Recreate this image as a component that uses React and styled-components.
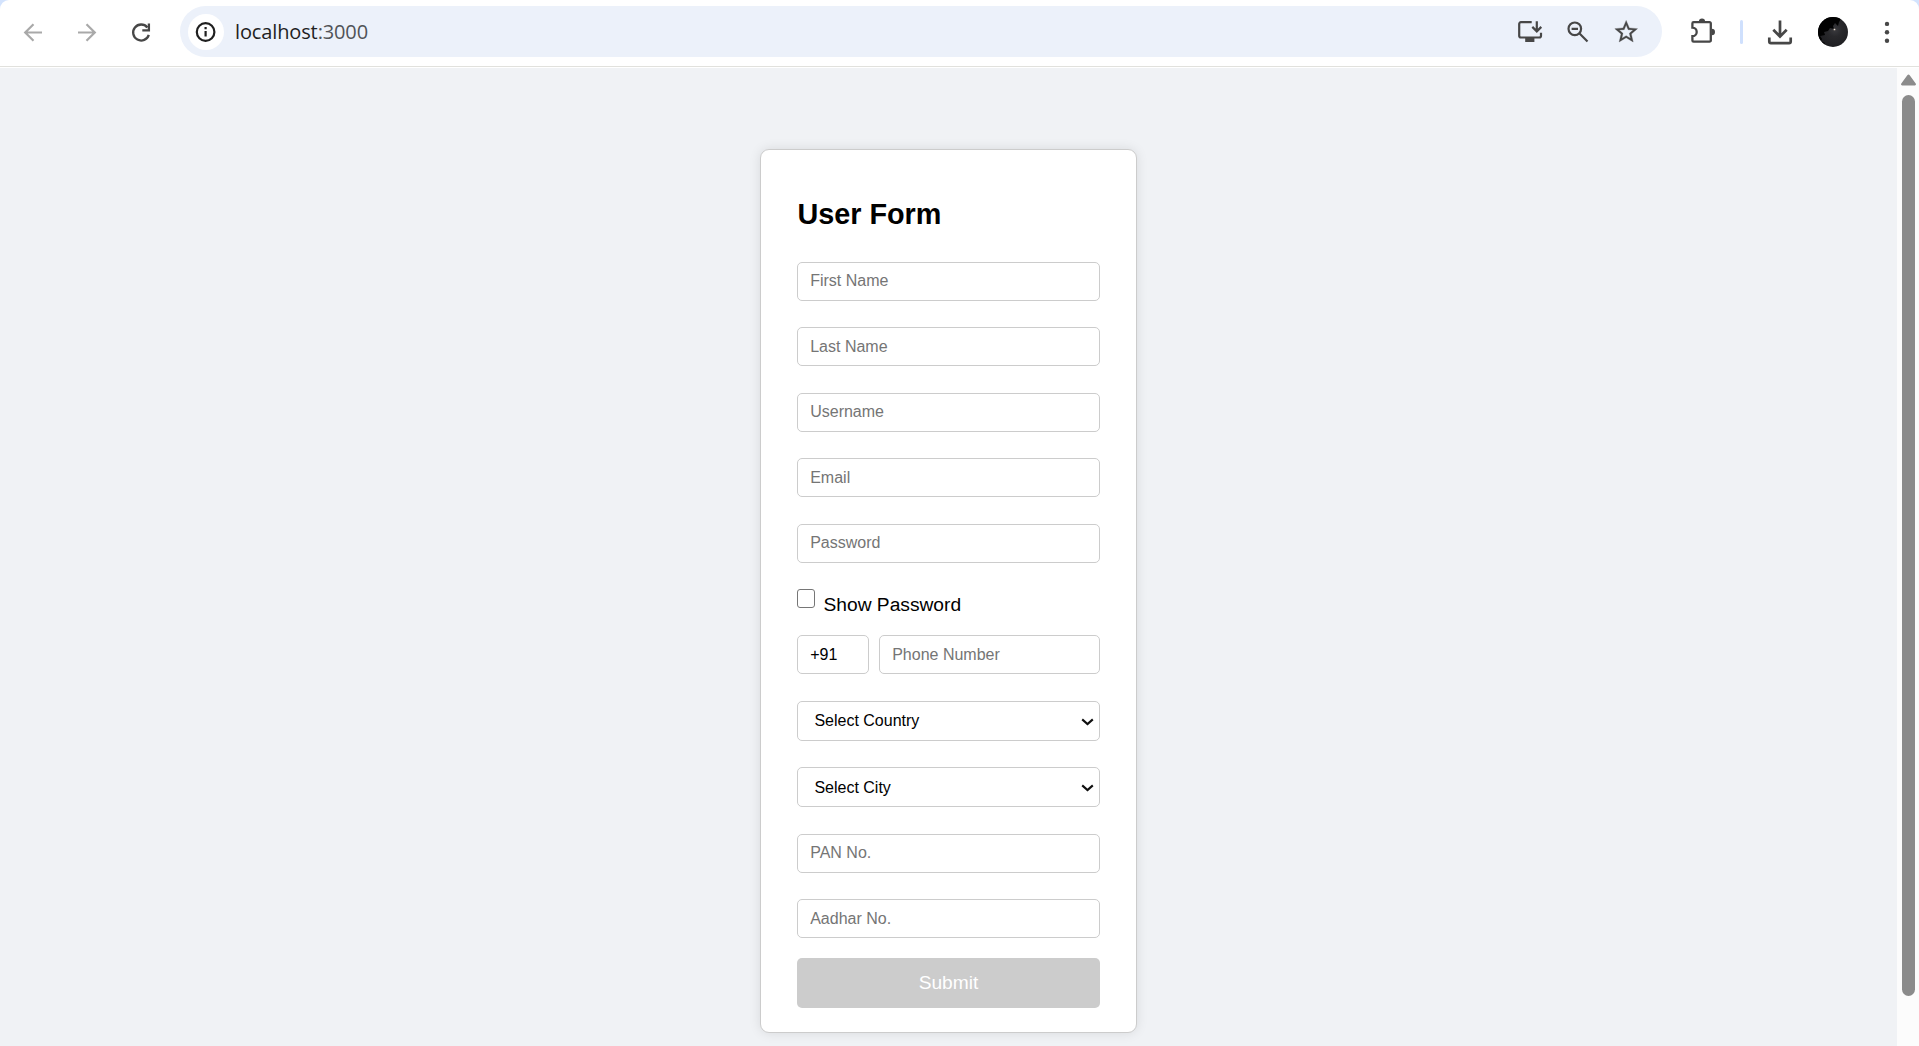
import React, { useState } from "react";
import styled, { createGlobalStyle } from "styled-components";

const GlobalStyle = createGlobalStyle`
  * { box-sizing: border-box; }
  body {
    margin: 0;
    overflow: hidden;
    background: #d3e3fd;
    font-family: "Liberation Sans", Arial, sans-serif;
  }
`;

const Browser = styled.div`
  display: flex;
  flex-direction: column;
  width: 1919px;
  height: 1046px;
  overflow: hidden;
`;

const Toolbar = styled.header`
  display: flex;
  align-items: center;
  flex: none;
  height: 68px;
  padding: 6px 27px 11px 20px;
  background: linear-gradient(#fff 66px, #e1e1dd 66px, #e1e1dd 67px, #fff 67px);
  border-radius: 9px 9px 0 0;
  color: #474747;
`;

const NavGroup = styled.nav`
  display: flex;
  gap: 28px;
  margin-right: 26px;
`;

const Icon = styled.svg`
  display: block;
  flex: none;
  width: ${(p) => p.$size || 28}px;
  height: ${(p) => p.$size || 28}px;
  color: ${(p) => p.$color || "#474747"};
  fill: none;
  stroke: currentColor;
  stroke-width: 2.2;
`;

const AddressBar = styled.div`
  display: flex;
  align-items: center;
  flex: 1;
  height: 51px;
  padding: 0 22px 0 8px;
  border-radius: 26px;
  background: #ecf1fa;
`;

const SiteInfo = styled.span`
  display: flex;
  align-items: center;
  justify-content: center;
  width: 36px;
  height: 36px;
  border-radius: 50%;
  background: #fff;
`;

const Url = styled.span`
  flex: 1;
  margin-left: 11px;
  font: 20px/28px "Open Sans", "Noto Sans", sans-serif;
  letter-spacing: -0.13px;
  color: #1f1f1f;
`;

const Port = styled.span`
  color: #505357;
`;

const AddressActions = styled.div`
  display: flex;
  gap: 20px;
`;

const BrowserActions = styled.div`
  display: flex;
  align-items: center;
  margin-left: 27px;
`;

const Separator = styled.span`
  width: 3px;
  height: 24px;
  margin: 0 23px;
  border-radius: 2px;
  background: #cfe0fd;
`;

const Avatar = styled.svg`
  width: 30px;
  height: 30px;
  margin: 0 34px 0 24px;
  border-radius: 50%;
`;

const MenuDots = styled.svg`
  width: 10px;
  height: 24px;
  fill: #474747;
`;

const Viewport = styled.div`
  display: flex;
  flex: 1;
  min-height: 0;
`;

const Page = styled.main`
  display: flex;
  flex: 1;
  justify-content: center;
  align-items: flex-start;
  padding-top: 81px;
  background: #f0f2f5;
`;

const ScrollTrack = styled.div`
  display: flex;
  flex-direction: column;
  align-items: center;
  width: 22px;
  padding: 6px 0 0 1px;
  background: #fcfcfc;
`;

const ScrollArrow = styled.svg`
  width: 15px;
  height: 12px;
  fill: #8b8b8b;
`;

const ScrollThumb = styled.div`
  width: 13px;
  height: 901px;
  margin-top: 9px;
  border-radius: 7px;
  background: #8b8b8b;
`;

const Card = styled.form`
  display: flex;
  flex-direction: column;
  width: 377px;
  height: 884px;
  padding: 48px 36px 0;
  border: 1px solid #ccc;
  border-radius: 9px;
  background: #fff;
  box-shadow: 0 0 12px rgba(0, 0, 0, 0.1);
`;

const Title = styled.h2`
  height: 64px;
  margin: 0;
  padding-left: 0.4px;
  font-size: 28.8px;
  line-height: 33px;
  color: #000;
`;

const Field = styled.input`
  display: block;
  width: ${(p) => p.$width || "100%"};
  height: 39px;
  margin: ${(p) => p.$gap || 0}px 0 0;
  padding: ${(p) => (p.$low ? "1px 12.2px 0" : "0 12.2px 1px")};
  border: 1px solid #ccc;
  border-radius: 5px;
  background: #fff;
  color: #000;
  font: 16px "Liberation Sans", Arial, sans-serif;
  outline: none;
  &::placeholder { color: #757575; opacity: 1; }
`;

const CheckRow = styled.label`
  display: flex;
  align-items: flex-start;
  height: 46px;
  margin-top: 26px;
`;

const Checkbox = styled.input`
  appearance: none;
  width: 18px;
  height: 19px;
  margin: 0;
  border: 1.5px solid #767676;
  border-radius: 3px;
  background: #fff;
  &:checked { background: #0075ff; }
`;

const CheckText = styled.span`
  margin: 5px 0 0 8.5px;
  font-size: 19.2px;
  line-height: 22px;
`;

const PhoneRow = styled.div`
  display: flex;
  gap: 10px;
`;

const SelectShell = styled.div`
  display: flex;
  align-items: center;
  flex: none;
  height: 40px;
  margin-top: ${(p) => p.$gap}px;
  padding-right: 5px;
  border: 1px solid #ccc;
  border-radius: 5px;
`;

const Select = styled.select`
  flex: 1;
  height: 38px;
  padding: ${(p) => (p.$low ? "1px 16.4px 0" : "0 16.4px 1px")};
  border: 0;
  appearance: none;
  background: transparent;
  color: #000;
  font: 16px "Liberation Sans", Arial, sans-serif;
  outline: none;
`;

const Chevron = styled.svg`
  width: 13px;
  height: 8px;
  margin-top: 2px;
  fill: none;
  stroke: #101010;
  stroke-width: 2.1;
`;

const Submit = styled.button`
  height: 50px;
  margin-top: 20px;
  padding: 0 0 1px;
  border: 0;
  border-radius: 5px;
  background: #ccc;
  color: #fff;
  font: 19.2px "Liberation Sans", Arial, sans-serif;
`;

function Dropdown({ label, gap, low }) {
  return (
    <SelectShell $gap={gap}>
      <Select $low={low} aria-label={label}>
        <option>{label}</option>
      </Select>
      <Chevron viewBox="0 0 13 8">
        <path d="M1.2 1.4 6.5 6.1l5.3-4.7" />
      </Chevron>
    </SelectShell>
  );
}

function BrowserToolbar() {
  return (
    <Toolbar>
      <NavGroup>
        <Icon $size={26} $color="#a9a9a9" viewBox="0 0 26 26">
          <path d="M22 13.5H6M13.5 5.2 5.2 13.5l8.3 8.3" />
        </Icon>
        <Icon $size={26} $color="#a9a9a9" viewBox="0 0 26 26">
          <path d="M4 13.5h16M12.5 5.2l8.3 8.3-8.3 8.3" />
        </Icon>
        <Icon $size={26} viewBox="0 0 26 26">
          <path
            d="M19.3 8.4A8 8 0 1 0 20.8 15.8M20.9 4.6v6.7h-6.6"
            strokeWidth="2.3"
          />
        </Icon>
      </NavGroup>

      <AddressBar>
        <SiteInfo>
          <Icon $size={22} $color="#1f1f1f" viewBox="0 0 22 22">
            <circle cx="10.6" cy="11" r="8.8" />
            <path d="M10.6 10v5.6M10.6 6.1v2.1" />
          </Icon>
        </SiteInfo>
        <Url>
          localhost<Port>:3000</Port>
        </Url>
        <AddressActions>
          <Icon viewBox="0 0 28 28">
            <path d="M15.7 4.2H4.9a1.7 1.7 0 0 0-1.7 1.7v11.9a1.7 1.7 0 0 0 1.7 1.7h18.4a1.7 1.7 0 0 0 1.7-1.7v-3.1" />
            <path d="M20.8 3.2v10M16.3 8.9l4.5 4.5 4.5-4.5" />
            <path d="M9.2 19.5h9.2V24H9.2z" fill="currentColor" stroke="none" />
          </Icon>
          <Icon viewBox="0 0 28 28">
            <circle cx="10.8" cy="10.8" r="6.3" />
            <path d="M7.6 10.8h6.4M15.3 15.3l8.2 8.2" />
          </Icon>
          <Icon viewBox="-0.45 -0.1 24.6 24.6">
            <path
              d="m22 9.24-7.19-.62L12 2 9.19 8.63 2 9.24l5.46 4.73L5.82 21 12 17.27 18.18 21l-1.63-7.03L22 9.24zM12 15.4l-3.76 2.27 1-4.28-3.32-2.88 4.38-.38L12 6.1l1.71 4.04 4.38.38-3.32 2.88 1 4.28L12 15.4z"
              fill="currentColor"
              stroke="currentColor"
              strokeWidth="0.25"
            />
          </Icon>
        </AddressActions>
      </AddressBar>

      <BrowserActions>
        <Icon viewBox="0 0 28 28">
          <path
            d="M4.6 4.2h16a1.2 1.2 0 0 1 1.2 1.2v17a1.2 1.2 0 0 1-1.2 1.2h-16a1.2 1.2 0 0 1-1.2-1.2v-4.2a4.3 4.3 0 0 0 0-8.600V5.400a1.200 1.200 0 0 1 1.200-1.200z"
            strokeWidth="2.300"
          />
          <path
            d="M9.900 3.600a3.100 3 0 0 1 6.200 0zM22.700 10.800a3.300 3.200 0 0 1 0 6.400z"
            fill="currentColor"
            stroke="none"
          />
        </Icon>
        <Separator />
        <Icon viewBox="0 0 28 28">
          <path
            d="M14 2.500v15.500M7.300 11.800l6.700 6.700 6.700-6.700M3.300 19.500v4a1.600 1.600 0 0 0 1.600 1.600h18.200a1.600 1.600 0 0 0 1.600-1.600v-4"
            strokeWidth="2.700"
          />
        </Icon>
        <Avatar viewBox="0 0 30 30">
          <defs>
            <radialGradient id="moonGlow" cx="0.56" cy="0.42" r="0.65">
              <stop offset="0" stopColor="#3b3b3f" />
              <stop offset="0.35" stopColor="#29292c" />
              <stop offset="1" stopColor="#1c1c1f" />
            </radialGradient>
          </defs>
          <rect width="30" height="30" fill="url(#moonGlow)" />
          <path
            d="M0 0h24l-3 5-1 4-3-3-2 3 1 3-4-1-2 3-4 1 1 3-5 1 2 3-1 2 4 2-1 2 3 1H0z"
            fill="#020202"
          />
          <circle cx="16.500" cy="12.500" r="1.500" fill="#4d4947" />
          <circle cx="16.500" cy="12.500" r="0.800" fill="#efe6df" />
        </Avatar>
        <MenuDots viewBox="0 0 10 24">
          <circle cx="5" cy="3.900" r="2.200" />
          <circle cx="5" cy="12.300" r="2.200" />
          <circle cx="5" cy="20.700" r="2.200" />
        </MenuDots>
      </BrowserActions>
    </Toolbar>
  );
}

export default function App() {
  const [showPassword, setShowPassword] = useState(false);

  return (
    <Browser>
      <GlobalStyle />
      <BrowserToolbar />
      <Viewport>
        <Page>
          <Card onSubmit={(e) => e.preventDefault()}>
            <Title>User Form</Title>
            <Field placeholder="First Name" />
            <Field placeholder="Last Name" $gap={26} $low />
            <Field placeholder="Username" $gap={27} />
            <Field placeholder="Email" $gap={26} $low />
            <Field
              placeholder="Password"
              type={showPassword ? "text" : "password"}
              $gap={27}
            />
            <CheckRow>
              <Checkbox
                type="checkbox"
                checked={showPassword}
                onChange={(e) => setShowPassword(e.target.checked)}
              />
              <CheckText>Show Password</CheckText>
            </CheckRow>
            <PhoneRow>
              <Field defaultValue="+91" aria-label="Country code" $width="72px" $low />
              <Field placeholder="Phone Number" $width="221px" $low />
            </PhoneRow>
            <Dropdown label="Select Country" gap={27} />
            <Dropdown label="Select City" gap={26} low />
            <Field placeholder="PAN No." $gap={27} />
            <Field placeholder="Aadhar No." $gap={26} $low />
            <Submit type="submit" disabled>
              Submit
            </Submit>
          </Card>
        </Page>
        <ScrollTrack>
          <ScrollArrow viewBox="0 0 15 12">
            <path d="M6.300 1.200a1.500 1.500 0 0 1 2.400 0l6 8.200a1.300 1.300 0 0 1-1.100 2.100H1.400A1.300 1.300 0 0 1 .3 9.400z" />
          </ScrollArrow>
          <ScrollThumb />
        </ScrollTrack>
      </Viewport>
    </Browser>
  );
}
